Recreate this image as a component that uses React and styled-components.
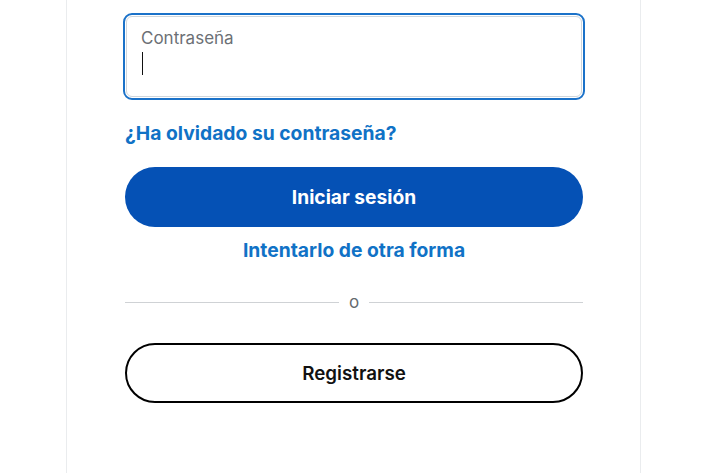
import React from "react";
import styled, { createGlobalStyle } from "styled-components";

const Global = createGlobalStyle`
  html, body { margin: 0; padding: 0; background: #ffffff; }
  body { font-family: "Inter", "Liberation Sans", sans-serif; }
  * { box-sizing: border-box; }
`;

const Page = styled.div`
  width: 702px;
  height: 473px;
  overflow: hidden;
  background: #ffffff;
`;

const Card = styled.div`
  margin-left: 66px;
  width: 575px;
  height: 473px;
  border-left: 1px solid #eaecee;
  border-right: 1px solid #eaecee;
  padding: 13px 57px 0 58px;
  display: flex;
  flex-direction: column;
`;

const FieldRing = styled.div`
  height: 87px;
  margin: 0 -2px;
  border: 2px solid #1b72c9;
  border-radius: 9px;
  padding: 1px;
`;

const Field = styled.div`
  height: 100%;
  border: 1px solid #cfd6dc;
  border-radius: 6px;
  padding: 9px 14px;
  display: flex;
  flex-direction: column;
`;

const Label = styled.span`
  font-size: 17px;
  line-height: 24px;
  color: #6c7075;
`;

const Caret = styled.span`
  display: block;
  width: 1px;
  height: 23px;
  margin-top: 2px;
  margin-left: 1px;
  background: #111111;
`;

const Link = styled.a`
  display: block;
  margin-top: ${(p) => p.$mt}px;
  font-size: 19.3px;
  line-height: 24px;
  font-weight: 700;
  color: #1072c6;
  text-decoration: none;
  text-align: ${(p) => (p.$center ? "center" : "left")};
`;

const Button = styled.button`
  margin-top: ${(p) => p.$mt}px;
  height: 60px;
  width: 100%;
  border-radius: 30px;
  font-family: inherit;
  font-size: ${(p) => (p.$primary ? "19.2px" : "18.8px")};
  font-weight: ${(p) => (p.$primary ? 700 : 600)};
  cursor: pointer;
  background: ${(p) => (p.$primary ? "#0551b5" : "#ffffff")};
  color: ${(p) => (p.$primary ? "#ffffff" : "#111111")};
  border: ${(p) => (p.$primary ? "none" : "2px solid #000000")};
`;

const Divider = styled.div`
  margin-top: 30px;
  height: 20px;
  display: flex;
  align-items: center;
  gap: 10px;
  font-size: 17px;
  color: #666a6e;
  &::before,
  &::after {
    content: "";
    flex: 1;
    height: 1px;
    background: #cfd2d5;
  }
`;

export default function App() {
  return (
    <Page>
      <Global />
      <Card>
        <FieldRing>
          <Field>
            <Label>Contraseña</Label>
            <Caret />
          </Field>
        </FieldRing>
        <Link href="#" $mt={21}>¿Ha olvidado su contraseña?</Link>
        <Button $primary $mt={22}>Iniciar sesión</Button>
        <Link href="#" $mt={11} $center>Intentarlo de otra forma</Link>
        <Divider>o</Divider>
        <Button $mt={31}>Registrarse</Button>
      </Card>
    </Page>
  );
}
